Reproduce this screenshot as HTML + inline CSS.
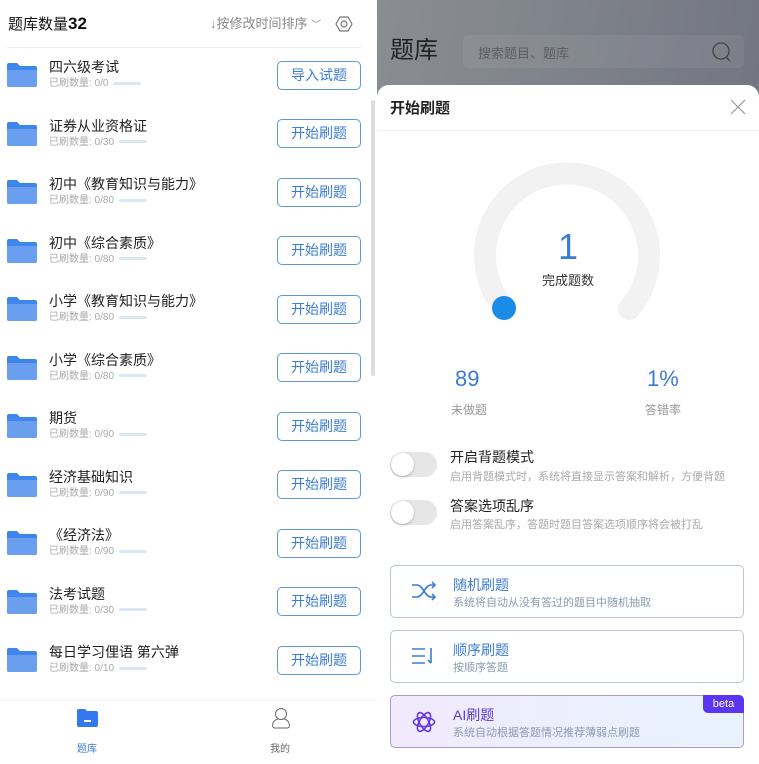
<!DOCTYPE html><html><head><meta charset="utf-8"><style>
*{margin:0;padding:0;box-sizing:border-box}
body{width:759px;height:764px;overflow:hidden;background:#fff;font-family:"Liberation Sans","Noto Sans CJK SC",sans-serif;position:relative}
.a{position:absolute}
.left{left:0;top:0;width:377px;height:764px;background:#fff}
.item{position:absolute;left:0;width:377px;height:58px}
.fold{position:absolute;left:7px;width:30px;height:25px}
.t{position:absolute;left:49px;font-size:14px;color:#222;white-space:nowrap;line-height:16px}
.s{position:absolute;left:49px;font-size:10px;color:#aaa;white-space:nowrap;line-height:12px}
.s i{display:inline-block;width:28px;height:3px;background:#dde6f5;border-radius:2px;vertical-align:middle;margin-left:5px}
.btn{position:absolute;left:277px;width:84px;height:29px;border:1px solid #5d97dc;border-radius:5px;color:#3b7dd3;font-size:14px;text-align:center;line-height:27px}
.right{left:377px;top:0;width:382px;height:764px;background:linear-gradient(100deg,#8a8e93,#6c6f7c)}
.sheet{left:377px;top:85px;width:382px;height:679px;background:#fff;border-radius:12px 12px 0 0}
.tog{position:absolute;left:390px;width:47px;height:25px;border-radius:13px;background:#e6e6e6}
.tog:after{content:"";position:absolute;left:1px;top:1px;width:23px;height:23px;border-radius:50%;background:#fff;box-shadow:0 1px 2px rgba(0,0,0,.3)}
.card{position:absolute;left:390px;width:354px;height:53px;border:1px solid #b9c6d6;border-radius:5px;background:#fff}
.card .ct{position:absolute;left:62px;top:9px;font-size:14px;color:#3b7dd3}
.card .cs{position:absolute;left:62px;top:28px;font-size:11px;color:#8a9bb0}
</style></head><body>
<div class="a left">
<div class="a" style="left:8px;top:15px;font-size:15px;color:#111;line-height:18px">题库数量<b style="font-size:17px">32</b></div>
<div class="a" style="left:210px;top:16px;font-size:13px;color:#888;line-height:16px">↓按修改时间排序 <span style="font-size:10px">﹀</span></div>
<svg class="a" style="left:335px;top:15px" width="18" height="18" viewBox="0 0 18 18"><polygon points="5,2 13,2 17,9 13,16 5,16 1,9" fill="none" stroke="#777" stroke-width="1.2"/><circle cx="9" cy="9" r="3" fill="none" stroke="#777" stroke-width="1.2"/></svg>
<div class="a" style="left:7px;top:47px;width:354px;height:1px;background:#eee"></div>
<div class="a" style="left:371px;top:100px;width:4px;height:276px;background:#ddd;border-radius:2px"></div>
</div>
<div id="list"></div>
<div class="a" style="left:0;top:700px;width:377px;height:1px;background:#f2f2f2"></div>
<svg class="a" style="left:76px;top:708px" width="23" height="19" viewBox="0 0 23 19"><path d="M1 3a2 2 0 0 1 2-2h6l2 2h9a2 2 0 0 1 2 2v12a2 2 0 0 1-2 2H3a2 2 0 0 1-2-2z" fill="#3478f0"/><rect x="8" y="12" width="7" height="2" fill="#fff"/></svg>
<div class="a" style="left:77px;top:740px;font-size:10px;color:#3b7dd3">题库</div>
<svg class="a" style="left:271px;top:707px" width="20" height="22" viewBox="0 0 20 22"><circle cx="10" cy="7" r="5.5" fill="none" stroke="#666" stroke-width="1"/><path d="M3 21c-3-2-1-8 4-9M17 21c3-2 1-8-4-9M3 21h14" fill="none" stroke="#666" stroke-width="1"/></svg>
<div class="a" style="left:270px;top:740px;font-size:10px;color:#666">我的</div>

<div class="a right"></div>
<div class="a" style="left:390px;top:36px;font-size:24px;color:#222;line-height:30px">题库</div>
<div class="a" style="left:463px;top:35px;width:281px;height:33px;border-radius:5px;background:rgba(255,255,255,.06)"></div>
<div class="a" style="left:478px;top:43px;font-size:13px;color:#5c5f66">搜索题目、题库</div>
<svg class="a" style="left:711px;top:41px" width="22" height="22"><circle cx="10" cy="10" r="8" fill="none" stroke="#444" stroke-width="1.3"/><path d="M15 16l4 4" stroke="#444" stroke-width="1.3"/></svg>

<div class="a sheet"></div>
<div class="a" style="left:390px;top:97px;font-size:15px;color:#222;font-weight:bold">开始刷题</div>
<svg class="a" style="left:730px;top:99px" width="16" height="16"><path d="M1 1L15 15M15 1L1 15" stroke="#999" stroke-width="1.2"/></svg>
<div class="a" style="left:377px;top:130px;width:382px;height:1px;background:#f0f0f0"></div>
<svg class="a" style="left:377px;top:130px" width="382" height="220"><path d="M128 179A82 82 0 1 1 252 179" fill="none" stroke="#f2f2f2" stroke-width="22" stroke-linecap="round"/><circle cx="127" cy="178" r="12" fill="#1b8be8"/></svg>
<div class="a" style="left:377px;width:382px;top:226px;text-align:center;font-size:36px;color:#3b7dd3;line-height:42px">1</div>
<div class="a" style="left:377px;width:382px;top:270px;text-align:center;font-size:13px;color:#333">完成题数</div>
<div class="a" style="left:455px;top:366px;font-size:22px;color:#3b7dd3">89</div>
<div class="a" style="left:451px;top:401px;font-size:12px;color:#999">未做题</div>
<div class="a" style="left:647px;top:366px;font-size:22px;color:#3b7dd3">1%</div>
<div class="a" style="left:645px;top:401px;font-size:12px;color:#999">答错率</div>
<div class="tog" style="top:452px"></div>
<div class="a" style="left:450px;top:447px;font-size:14px;color:#222">开启背题模式</div>
<div class="a" style="left:450px;top:468px;font-size:11px;color:#aaa">启用背题模式时，系统将直接显示答案和解析，方便背题</div>
<div class="tog" style="top:500px"></div>
<div class="a" style="left:450px;top:496px;font-size:14px;color:#222">答案选项乱序</div>
<div class="a" style="left:450px;top:516px;font-size:11px;color:#aaa">启用答案乱序，答题时题目答案选项顺序将会被打乱</div>

<div class="card" style="top:565px"><svg class="a" style="left:20px;top:15px" width="26" height="20" viewBox="0 0 26 20"><path d="M1 4h5c6 0 8 12 14 12h4M1 16h5c6 0 8-12 14-12h4M21 1l3 3-3 3M21 13l3 3-3 3" fill="none" stroke="#3b7dd3" stroke-width="1.6"/></svg><div class="ct">随机刷题</div><div class="cs">系统将自动从没有答过的题目中随机抽取</div></div>
<div class="card" style="top:630px"><svg class="a" style="left:20px;top:16px" width="26" height="20" viewBox="0 0 26 20"><path d="M1 2h13M1 9h13M1 16h13M20 1v15M17 13l3 3" fill="none" stroke="#3b7dd3" stroke-width="1.6"/></svg><div class="ct">顺序刷题</div><div class="cs">按顺序答题</div></div>
<div class="card" style="top:695px;background:linear-gradient(90deg,#f1eafc,#e8f3fe);border-color:#a99cc4"><svg class="a" style="left:21px;top:14px" width="24" height="24" viewBox="0 0 24 24"><g fill="none" stroke="#6236e0" stroke-width="1.6"><ellipse cx="12" cy="12" rx="10.5" ry="4.5"/><ellipse cx="12" cy="12" rx="10.5" ry="4.5" transform="rotate(60 12 12)"/><ellipse cx="12" cy="12" rx="10.5" ry="4.5" transform="rotate(120 12 12)"/></g></svg><div class="ct" style="color:#5a3bd0">AI刷题</div><div class="cs">系统自动根据答题情况推荐薄弱点刷题</div><div class="a" style="right:-1px;top:-1px;width:41px;height:18px;background:#5b35f0;color:#fff;font-size:11px;text-align:center;line-height:18px;border-radius:0 5px 0 5px">beta</div></div>

<script>
var d=[["四六级考试","0/0","导入试题"],["证券从业资格证","0/30"],["初中《教育知识与能力》","0/80"],["初中《综合素质》","0/80"],["小学《教育知识与能力》","0/80"],["小学《综合素质》","0/80"],["期货","0/90"],["经济基础知识","0/90"],["《经济法》","0/90"],["法考试题","0/30"],["每日学习俚语 第六弹","0/10"]];
var h="";d.forEach(function(x,i){var c=75+i*58.5;
h+='<svg class="fold" style="top:'+(c-13)+'px" viewBox="0 0 30 25"><path d="M0 3a2 2 0 0 1 2-2h8l3 3h15a2 2 0 0 1 2 2v17a2 2 0 0 1-2 2H2a2 2 0 0 1-2-2z" fill="#3f86ec"/><path d="M0 8h30v15a2 2 0 0 1-2 2H2a2 2 0 0 1-2-2z" fill="#6a9ff0"/></svg>';
h+='<div class="t" style="top:'+(c-16)+'px">'+x[0]+'</div><div class="s" style="top:'+(c+3)+'px">已刷数量: '+x[1]+'<i></i></div>';
h+='<div class="btn" style="top:'+(c-14.5)+'px">'+(x[2]||"开始刷题")+'</div>';});
document.getElementById("list").innerHTML=h;
</script>
</body></html>
